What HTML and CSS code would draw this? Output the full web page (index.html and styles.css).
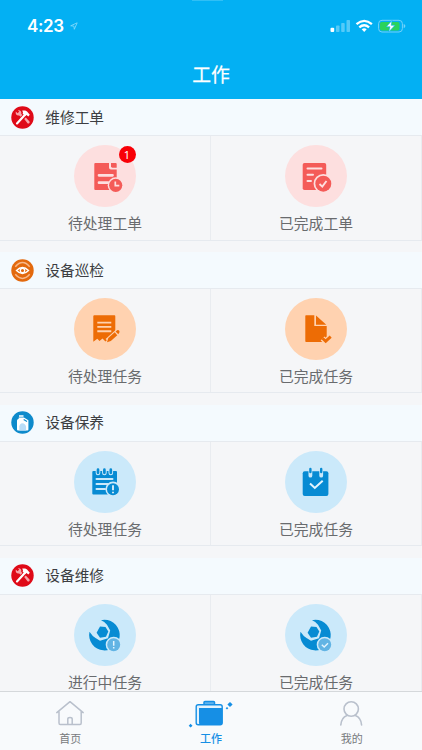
FILE: index.html
```html
<!DOCTYPE html>
<html lang="zh-CN">
<head>
<meta charset="utf-8">
<title>工作</title>
<link rel="stylesheet" href="styles.css">
</head>
<body>
<svg class="defs" aria-hidden="true">
  <symbol id="tools" viewBox="0 0 23 23">
    <circle cx="11.5" cy="11.5" r="11.2" fill="#df0a18"/>
    <path d="M6 17.400 14 8.700" stroke="#fff" stroke-width="2.200" stroke-linecap="round"/>
    <path d="M11 4.800c2.500-.9 4.600-.2 5.700 1.400l2.100 2.600-1.500 1.600-1.800-1.300-1.500.800-2.400-2.300c.6-1 .5-2-.6-2.800z" fill="#fff"/>
    <path d="M4.800 5.500 6.600 7.300 8.300 5.600 7 4.400c2.400-.4 3.900 1.500 3.200 3.300l1.200 1.400-1.800 1.700-1.400-1.300C6.100 10.100 4.100 8.200 4.800 5.500zM13.200 13l1.600-1.400 3.700 3.800c.7 1.400-.8 2.700-2 1.900z" fill="#f7a5aa"/>
  </symbol>
  <symbol id="wrench" viewBox="0 0 62 62">
    <path d="M27 16.200A15.300 15.300 0 1 1 15.500 27.800Q18.500 32.500 21.500 34L26 36.800 34 34.300 36.200 26.500 33 20.800Q30.500 17.500 27 16.200z" fill="#078bd3"/>
    <path d="M26 22.600 31.500 22.900 34.300 27.500 32 32.700 26 33.700 22.600 28.800z" fill="#078bd3"/>
    <circle cx="39.700" cy="40.700" r="8" fill="#cbe9fa"/>
    <circle cx="39.700" cy="40.700" r="6.500" fill="#62b4e4"/>
  </symbol>
</svg>
<div class="app">
  <header class="header">
    <div class="status">
      <span class="time">4:23</span>
      <svg class="location" viewBox="0 0 8 8"><path d="M.7 3.800 7.200.8 4.300 7.300 3.900 4.100z" fill="none" stroke="#8bdcfb" stroke-width=".8"/></svg>
      <svg class="signals" viewBox="0 0 78 16">
        <g fill="#55caf8"><rect x="6" y="7.500" width="3.500" height="6.500" rx=".8"/><rect x="11.200" y="5" width="3.500" height="9" rx=".8"/><rect x="16.500" y="2" width="3.500" height="12" rx=".8"/></g>
        <rect x=".5" y="9.700" width="3.700" height="4.300" rx="1" fill="#fff"/>
        <g fill="none" stroke="#fff" stroke-width="2.300"><path d="M26.500 6.200q7.700-6.600 15.400 0"/><path d="M29.300 9.400q4.900-4.200 9.800 0"/></g>
        <path d="M31.700 11.300q2.500-2 5 0L34.200 14z" fill="#fff"/>
        <rect x="48.600" y="2.300" width="23.800" height="11.700" rx="3.400" fill="none" stroke="#73d2fa"/>
        <path d="M73.700 6v4.200q1.700-.5 1.700-2.100T73.700 6z" fill="#73d2fa"/>
        <rect x="50" y="3.900" width="19.500" height="8.500" rx="1.700" fill="#2bd35a"/>
        <path d="M62 2.400 56.300 8.800H60L58.700 13.900 65 7.300H61.200z" fill="#fff" stroke="#03b0f3" stroke-width=".6"/>
      </svg>
    </div>
    <h1 class="title">工作</h1>
  </header>

  <main class="content">
    <section class="section">
      <h2 class="section-head"><svg class="mark"><use href="#tools"/></svg><span>维修工单</span></h2>
      <div class="grid">
        <a class="cell">
          <span class="disc red"><svg viewBox="0 0 62 62">
            <path d="M21.300 18H35V22.500Q35 24.500 37 24.500H42.700V45H21.300Q20.300 45 20.300 44V19Q20.300 18 21.300 18z" fill="#f45b58"/>
            <path d="M37 18H41.700Q42.700 18 42.700 19V22.700H38.400Q37 22.700 37 21.300z" fill="#f45b58"/>
            <path d="M25 30.300H38.500M25 37.700H34" stroke="#fddfdf" stroke-width="2.700" stroke-linecap="round"/>
            <circle cx="41.700" cy="40.300" r="8" fill="#fddfdf"/><circle cx="41.700" cy="40.300" r="6.600" fill="#f45b58"/>
            <path d="M41.300 36.500V40.700H45.300" fill="none" stroke="#fddfdf" stroke-width="1.700"/>
          </svg><b class="badge">1</b></span>
          <span class="label">待处理工单</span>
        </a>
        <a class="cell">
          <span class="disc red"><svg viewBox="0 0 62 62">
            <rect x="17.700" y="18" width="23.500" height="27" rx="1.800" fill="#f45b58"/>
            <path d="M22.500 23.500H36.500M22.500 29.800H28M22.500 36H26" stroke="#fddfdf" stroke-width="2" stroke-linecap="round"/>
            <circle cx="38.300" cy="38.700" r="9.700" fill="#fddfdf"/><circle cx="38.300" cy="38.700" r="8" fill="#f45b58"/>
            <path d="M34.500 39 37.300 41.600 41.500 36" fill="none" stroke="#fddfdf" stroke-width="1.900"/>
          </svg></span>
          <span class="label">已完成工单</span>
        </a>
      </div>
    </section>

    <section class="section">
      <h2 class="section-head"><svg class="mark" viewBox="0 0 23 23">
        <circle cx="11.500" cy="11.500" r="11.200" fill="#e3690d"/>
        <path d="M4.300 7.700Q11.500-.5 18.700 7.700M4.300 15.300Q11.500 23.500 18.700 15.300" fill="none" stroke="#f8b98a" stroke-width="1.500"/>
        <path d="M5.500 11.500Q11.500 5.500 17.500 11.500 11.500 17.500 5.500 11.500z" fill="#e3690d" stroke="#fff" stroke-width="1.400"/><circle cx="11.500" cy="11.500" r="2.200" fill="none" stroke="#fff" stroke-width="1.300"/>
      </svg><span>设备巡检</span></h2>
      <div class="grid">
        <a class="cell">
          <span class="disc orange"><svg viewBox="0 0 62 62">
            <path d="M20.300 17.300H40.500Q41.300 17.300 41.300 18.300V38L36 43 33.500 41.500 31.500 43.500 28.500 40.500 25.500 43 23.300 40.800 19.300 43.700V18.300Q19.300 17.300 20.300 17.300z" fill="#ed6c05"/>
            <path d="M23.300 24.600H37.300M23.300 28.900H37.300M23.300 33.300H37.300" stroke="#ffd2b0" stroke-width="1.900"/>
            <path d="M34 43.500 44.500 34" stroke="#ffd2b0" stroke-width="7"/>
            <path d="M33 44.300 34.300 40 40.700 34.300 43.300 37.200 36.800 43z" fill="#ed6c05"/><path d="M41.600 33.500 43.200 32.200Q45.300 31.600 45.600 34L44.300 36.300z" fill="#ed6c05"/>
          </svg></span>
          <span class="label">待处理任务</span>
        </a>
        <a class="cell">
          <span class="disc orange"><svg viewBox="0 0 62 62">
            <path d="M21 17.300H29.300V28H41.700V44H21Q20.300 44 20.300 43V18Q20.300 17.300 21 17.300z" fill="#ed6c05"/>
            <path d="M31 17.500 41.300 26.700H31z" fill="#ed6c05"/>
            <path d="M37.500 40.500 40.700 43.300 46 38.500" fill="none" stroke="#ffd2b0" stroke-width="5.500"/>
            <path d="M37.500 40.300 40.700 43.200 45.700 38.700" fill="none" stroke="#ed6c05" stroke-width="2.900"/>
          </svg></span>
          <span class="label">已完成任务</span>
        </a>
      </div>
    </section>

    <section class="section">
      <h2 class="section-head"><svg class="mark" viewBox="0 0 23 23">
        <circle cx="11.500" cy="11.500" r="11.200" fill="#0d8acb"/>
        <path d="M8 4.300h4.500v1.500H8zM7.700 6.600h5.200l4.500 2.700v9.200q0 1-1 1H7q-1 0-1-1V9.500q0-1 1.700-1.700z" fill="#fff"/>
        <path d="M8.300 19.500v-4q.4-3 3-3.300 3 .2 3.800 3.600v3.700z" fill="#b9ddf8"/><path d="M12.700 8.600 16 10.500" stroke="#0d8acb" stroke-width="1.200"/>
      </svg><span>设备保养</span></h2>
      <div class="grid">
        <a class="cell">
          <span class="disc blue"><svg viewBox="0 0 62 62">
            <rect x="18.300" y="20" width="24.700" height="23.400" rx="1" fill="#078bd3"/>
            <path d="M24 18.500V22M30.400 18.500V22M36.800 18.500V22" stroke="#cbe9fa" stroke-width="4.600" stroke-linecap="round"/>
            <path d="M24 18.700V21.800M30.400 18.700V21.800M36.800 18.700V21.800" stroke="#078bd3" stroke-width="2.700" stroke-linecap="round"/>
            <path d="M22.500 28H38.500M22.500 33H34M22.500 38H31" stroke="#cbe9fa" stroke-width="2" stroke-linecap="round"/>
            <circle cx="39" cy="38.200" r="7.600" fill="#cbe9fa"/><circle cx="39" cy="38.200" r="6" fill="#078bd3"/>
            <path d="M39 34.300V39.300M39 40.700V42.300" stroke="#fff" stroke-width="1.600"/>
          </svg></span>
          <span class="label">待处理任务</span>
        </a>
        <a class="cell">
          <span class="disc blue"><svg viewBox="0 0 62 62">
            <rect x="17.700" y="20.300" width="25.700" height="24.600" rx="2" fill="#078bd3"/>
            <path d="M25.400 19V24.700M36.200 19V24.700" stroke="#cbe9fa" stroke-width="3.800" stroke-linecap="round"/>
            <path d="M25.400 18V21M36.200 18V21" stroke="#078bd3" stroke-width="2.400" stroke-linecap="round"/>
            <path d="M25 32.500 29.800 37 37.700 29.700" fill="none" stroke="#e2f4fe" stroke-width="2"/>
          </svg></span>
          <span class="label">已完成任务</span>
        </a>
      </div>
    </section>

    <section class="section">
      <h2 class="section-head"><svg class="mark"><use href="#tools"/></svg><span>设备维修</span></h2>
      <div class="grid">
        <a class="cell">
          <span class="disc blue"><svg viewBox="0 0 62 62"><use href="#wrench"/><path d="M39.700 37V41.700M39.700 43V44.500" stroke="#e2f4fe" stroke-width="1.500"/></svg></span>
          <span class="label">进行中任务</span>
        </a>
        <a class="cell">
          <span class="disc blue"><svg viewBox="0 0 62 62"><use href="#wrench"/><path d="M36.800 40.700 39.200 43 43 39.200" fill="none" stroke="#e2f4fe" stroke-width="1.400"/></svg></span>
          <span class="label">已完成任务</span>
        </a>
      </div>
    </section>
  </main>

  <nav class="tabs">
    <a class="tab">
      <svg viewBox="0 0 46 28" fill="none" stroke="#b9c0cc" stroke-width="1.500" stroke-linejoin="round" stroke-linecap="round">
        <path d="M9.800 12.600 23 1.700 36.200 12.600M12 11.500V23Q12 24.500 13.200 24.500H33Q34.200 24.500 34.200 23V11.500M20.800 24.300V19Q20.800 17.500 23 17.500T25.200 19V24.300"/>
      </svg><span>首页</span>
    </a>
    <a class="tab active">
      <svg viewBox="0 0 46 28">
        <path d="M16 4V2.300Q16 1.500 17 1.500H25.500Q26.500 1.500 26.500 2.300V4" fill="#5fb3ee" stroke="#168fe5" stroke-width="1.500"/>
        <rect x="8.200" y="4.700" width="26" height="20" rx="2" fill="#e4f3fd" stroke="#168fe5" stroke-width="1.400"/>
        <path d="M11 7.900H34.200V23Q34.200 24.700 32.500 24.700H12.500Q11 24.700 11 23z" fill="#168fe5"/>
        <path d="M42 1.900 44.600 4.500 42 7.100 39.400 4.500zM39 7 40.300 8.300 39 9.600 37.700 8.300zM2.600 23.800 4.500 25.700 2.600 27.600.7 25.700z" fill="#168fe5"/>
      </svg><span>工作</span>
    </a>
    <a class="tab">
      <svg viewBox="0 0 46 28" fill="none" stroke="#b9c0cc" stroke-width="1.600" stroke-linecap="round">
        <circle cx="22.200" cy="9" r="7.200"/><path d="M11.800 25Q12.300 17.700 18 15.500M32.600 25Q32.100 17.700 26.400 15.500"/>
      </svg><span>我的</span>
    </a>
  </nav>
</div>
</body>
</html>
```
FILE: styles.css
```css
* { box-sizing: border-box; }

body {
  margin: 0;
  background: #f5f6f8;
  font-family: "Noto Sans CJK SC", sans-serif;
}

.defs { position: absolute; width: 0; height: 0; }

.app {
  display: flex;
  flex-direction: column;
  height: 750px;
  overflow: hidden;
}

.header {
  position: relative;
  flex: none;
  height: 99px;
  background: #03b0f3;
  color: #fff;
}

.header::before {
  content: "";
  position: absolute;
  top: 0;
  left: 192px;
  width: 31px;
  height: 1px;
  background: #30bff5;
}

.status {
  display: flex;
  align-items: center;
  height: 52px;
  padding: 0 14px 0 27px;
}

.time {
  width: 37px;
  font: 600 17px/20px Inter, sans-serif;
  letter-spacing: -0.400px;
}

.location { width: 8px; height: 8px; margin-left: 6px; }
.signals { width: 78px; height: 16px; margin-left: auto; }

.title {
  margin: 7px 0 0;
  text-align: center;
  font-size: 18.800px;
  line-height: 29px;
  font-weight: 400;
  -webkit-text-stroke: 0.250px #fff;
}

.content {
  flex: 1;
  min-height: 0;
  overflow: hidden;
}

.section { height: 141.600px; margin-bottom: 11.250px; }

.section-head {
  display: flex;
  align-items: center;
  gap: 11px;
  height: 36.400px;
  margin: 0;
  padding-left: 11.300px;
  background: #f4fafe;
  color: #3c3e42;
  font-size: 14.700px;
  line-height: 22px;
  font-weight: 400;
}

.section-head span { padding-bottom: 1px; }

.mark { width: 23px; height: 23px; }

.grid {
  display: grid;
  grid-template-columns: 1fr 1fr;
  height: 105.200px;
  border-top: 1px solid #e6eaef;
  border-bottom: 1px solid #e6eaef;
}

.cell {
  display: flex;
  flex-direction: column;
  align-items: center;
  padding-top: 9px;
  border-right: 1px solid #e9ecf0;
}

.disc {
  position: relative;
  width: 62px;
  height: 62px;
  border-radius: 50%;
}

.disc svg { display: block; width: 62px; height: 62px; }
.red { background: #fddfdf; }
.orange { background: #ffd2b0; }
.blue { background: #cbe9fa; }

.badge {
  position: absolute;
  top: 0.500px;
  right: 0.500px;
  width: 17px;
  height: 17px;
  border-radius: 50%;
  background: #f80007;
  color: #fff;
  text-align: center;
  font: 400 11px/17px "Noto Sans", sans-serif;
}

.label {
  margin-top: 6.800px;
  color: #696b6e;
  font-size: 14.800px;
  line-height: 17px;
}

.tabs {
  flex: none;
  display: grid;
  grid-template-columns: repeat(3, 1fr);
  height: 59px;
  border-top: 1px solid #d5d8db;
  background: #f8fafc;
}

.tab {
  display: flex;
  flex-direction: column;
  align-items: center;
  padding-top: 8px;
  color: #77797d;
  font-size: 11px;
  line-height: 16px;
}

.tab svg { width: 46px; height: 28px; margin-bottom: 2px; }
.active { color: #168fe5; font-weight: 500; }
```
